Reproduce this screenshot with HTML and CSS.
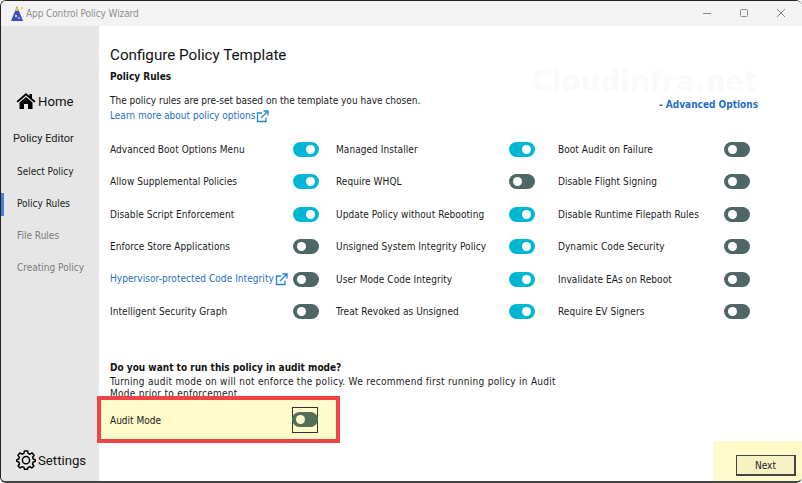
FILE: index.html
```html
<!DOCTYPE html>
<html lang="en">
<head>
    <meta charset="UTF-8">
    <meta name="viewport" content="width=device-width, initial-scale=1.0">
    <title>App Control Policy Wizard</title>
    <link rel="stylesheet" href="styles.css">
</head>
<body>
    <div class="window">
        <header class="titlebar">
            <svg class="app-icon" width="16" height="18" viewBox="0 0 16 18">
                <path d="M8 1 L14 16 L2 16 Z" fill="#3b4fc4"/>
                <path d="M8 1 L10 6 L6 6 Z" fill="#e8c23a"/>
                <circle cx="7" cy="11" r="1.2" fill="#f2d54a"/>
                <circle cx="10" cy="13" r="1" fill="#9db7f0"/>
                <circle cx="13" cy="3" r="1" fill="#e8c23a"/>
            </svg>
            <span class="app-title">App Control Policy Wizard</span>
            <div class="window-buttons">
                <svg width="10" height="10" viewBox="0 0 10 10"><path d="M1 5.5 H9" stroke="#8a8a8a" fill="none"/></svg>
                <svg width="10" height="10" viewBox="0 0 10 10"><rect x="1.5" y="1.5" width="7" height="7" rx="1" stroke="#8a8a8a" fill="none"/></svg>
                <svg width="10" height="10" viewBox="0 0 10 10"><path d="M1 1 L9 9 M9 1 L1 9" stroke="#8a8a8a" fill="none"/></svg>
            </div>
        </header>
        <div class="main">
            <nav class="sidebar">
                <div class="nav-main">
                    <svg class="nav-icon" width="20" height="18" viewBox="0 0 20 18">
                        <path d="M10 1 L0.5 9.3 L1.8 10.6 L10 3.5 L18.2 10.6 L19.5 9.3 L16 6.2 V2 H13.5 V4 Z" fill="#000"/>
                        <path d="M3.5 10.6 L10 5 L16.5 10.6 V17 H12 V12 H8 V17 H3.5 Z" fill="#000"/>
                    </svg>
                    <span>Home</span>
                </div>
                <div class="nav-group">Policy Editor</div>
                <div class="nav-item">Select Policy</div>
                <div class="nav-item current">Policy Rules</div>
                <div class="nav-item disabled">File Rules</div>
                <div class="nav-item disabled">Creating Policy</div>
                <div class="nav-main nav-settings">
                    <svg class="nav-icon" width="20" height="20" viewBox="0 0 20 20">
                        <path d="M8.4 1 H11.6 L12.1 3.4 L14 4.2 L16.1 2.9 L18.1 5.2 L16.6 7.1 L17.2 9 L19.2 9.6 V11.4 L17.2 12 L16.5 14 L17.9 16 L15.8 18 L13.9 16.7 L12 17.4 L11.5 19.2 H8.5 L8 17.4 L6 16.7 L4.1 18 L2.1 16 L3.5 14 L2.8 12 L0.8 11.4 V9.6 L2.8 9 L3.4 7.1 L1.9 5.2 L3.9 2.9 L6 4.2 L7.9 3.4 Z" fill="none" stroke="#000" stroke-width="1.5" stroke-linejoin="round"/>
                        <circle cx="10" cy="10.2" r="3.6" fill="none" stroke="#000" stroke-width="1.5"/>
                    </svg>
                    <span>Settings</span>
                </div>
            </nav>
            <section class="content">
                <h1>Configure Policy Template</h1>
                <h2>Policy Rules</h2>
                <div class="intro">
                    <div>
                        <p>The policy rules are pre-set based on the template you have chosen.</p>
                        <a class="link">Learn more about policy options<svg width="13" height="13" viewBox="0 0 13 13"><path d="M10 7.5 V11.5 H1.5 V3 H6 M5 8 L11.5 1.5 M7.5 1 H12 V5.5" fill="none" stroke="#1f86d8" stroke-width="1.3"/></svg></a>
                    </div>
                    <a class="advanced">- Advanced Options</a>
                </div>
                <div class="rules">
                    <div class="rule"><span>Advanced Boot Options Menu</span><i class="toggle on"></i></div>
                    <div class="rule"><span>Managed Installer</span><i class="toggle on"></i></div>
                    <div class="rule"><span>Boot Audit on Failure</span><i class="toggle"></i></div>
                    <div class="rule"><span>Allow Supplemental Policies</span><i class="toggle on"></i></div>
                    <div class="rule"><span>Require WHQL</span><i class="toggle"></i></div>
                    <div class="rule"><span>Disable Flight Signing</span><i class="toggle"></i></div>
                    <div class="rule"><span>Disable Script Enforcement</span><i class="toggle on"></i></div>
                    <div class="rule"><span>Update Policy without Rebooting</span><i class="toggle on"></i></div>
                    <div class="rule"><span>Disable Runtime Filepath Rules</span><i class="toggle"></i></div>
                    <div class="rule"><span>Enforce Store Applications</span><i class="toggle"></i></div>
                    <div class="rule"><span>Unsigned System Integrity Policy</span><i class="toggle on"></i></div>
                    <div class="rule"><span>Dynamic Code Security</span><i class="toggle"></i></div>
                    <div class="rule">
                        <a class="link">Hypervisor-protected Code Integrity<svg width="13" height="13" viewBox="0 0 13 13"><path d="M10 7.5 V11.5 H1.5 V3 H6 M5 8 L11.5 1.5 M7.5 1 H12 V5.5" fill="none" stroke="#1f86d8" stroke-width="1.3"/></svg></a>
                        <i class="toggle"></i>
                    </div>
                    <div class="rule"><span>User Mode Code Integrity</span><i class="toggle on"></i></div>
                    <div class="rule"><span>Invalidate EAs on Reboot</span><i class="toggle"></i></div>
                    <div class="rule"><span>Intelligent Security Graph</span><i class="toggle"></i></div>
                    <div class="rule"><span>Treat Revoked as Unsigned</span><i class="toggle on"></i></div>
                    <div class="rule"><span>Require EV Signers</span><i class="toggle"></i></div>
                </div>
                <h2 class="audit-title">Do you want to run this policy in audit mode?</h2>
                <p class="audit-text">Turning audit mode on will not enforce the policy. We recommend first running policy in Audit Mode prior to enforcement.</p>
            </section>
        </div>
        <div class="watermark">Cloudinfra.net</div>
        <div class="audit-box"><span class="audit-label">Audit Mode</span><span class="audit-focus"><i class="toggle audit"></i></span></div>
        <div class="next-area"><button class="next">Next</button></div>
    </div>
</body>
</html>
```

FILE: styles.css
```css
body {
    margin: 0;
    background-color: #fff;
    font-family: "DejaVu Sans", sans-serif;
    font-stretch: condensed;
    font-size: 10px;
    color: #1a1a1a;
}
.window {
    position: relative;
    width: 802px;
    height: 483px;
    box-sizing: border-box;
    border-top: 1px solid #222;
    border-left: 1px solid #222;
    border-bottom: 2px solid #444;
    border-radius: 6px;
    overflow: hidden;
    display: flex;
    flex-direction: column;
}
.titlebar {
    height: 25px;
    background-color: #f3f3f3;
    display: flex;
    align-items: center;
    padding-left: 8px;
    flex-shrink: 0;
}
.app-title {
    margin-left: 1px;
    color: #8f8f8f;
    font-size: 10px;
    letter-spacing: -0.1px;
}
.window-buttons {
    margin-left: auto;
    margin-right: 16px;
    margin-bottom: 2px;
    display: flex;
    gap: 27px;
}
.main {
    flex: 1;
    display: flex;
    min-height: 0;
}
.sidebar {
    width: 98px;
    flex-shrink: 0;
    background-color: #e6e6e6;
    display: flex;
    flex-direction: column;
}
.nav-main {
    display: flex;
    align-items: center;
    gap: 2px;
    margin-top: 65px;
    padding-left: 15px;
    height: 20px;
    font-size: 13.2px;
    font-family: Roboto, sans-serif;
    font-stretch: normal;
    color: #111;
}
.nav-settings {
    margin-top: auto;
    margin-bottom: 11px;
}
.nav-group {
    margin-top: 18px;
    padding-left: 12px;
    height: 21px;
    line-height: 20px;
    font-size: 11px;
    font-family: Roboto, sans-serif;
    font-stretch: normal;
}
.nav-item {
    position: relative;
    margin-top: 12px;
    padding-left: 16px;
    height: 20px;
    line-height: 20px;
    font-size: 10px;
}
.nav-item.disabled {
    color: #7a7a7a;
}
.nav-item.current::before {
    content: "";
    position: absolute;
    left: 0;
    top: -1px;
    width: 3px;
    height: 23px;
    background-color: #4a7fd6;
}
.content {
    flex: 1;
    min-width: 0;
    padding: 18px 44px 0 11px;
    background-color: #fff;
}
h1 {
    margin: 0;
    font-family: Roboto, sans-serif;
    font-stretch: normal;
    font-size: 15.2px;
    font-weight: 400;
    line-height: 22px;
    color: #111;
}
h2 {
    margin: 4px 0 0;
    font-size: 10px;
    font-weight: 700;
    line-height: 14px;
    color: #111;
}
p {
    margin: 0;
    line-height: 14px;
}
.intro {
    margin-top: 10px;
    display: flex;
    justify-content: space-between;
    align-items: flex-start;
}
.intro p {
    margin-bottom: 1px;
}
.link {
    color: #1f6fc4;
    display: inline-flex;
    align-items: center;
    white-space: nowrap;
    line-height: 14px;
}
.link svg {
    margin-left: 1px;
}
.advanced {
    margin-top: 5px;
    color: #1f6fc4;
    font-weight: 700;
}
.rules {
    margin-top: 10.4px;
    display: grid;
    grid-template-columns: 226px 222px 192px;
    grid-auto-rows: 32.4px;
    letter-spacing: 0.06px;
}
.rule {
    display: flex;
    align-items: center;
    justify-content: space-between;
    padding-right: 17px;
}
.rule:nth-child(3n) {
    padding-right: 0;
}
.rule:nth-child(3n+2) {
    padding-right: 23px;
}
.toggle {
    display: block;
    position: relative;
    width: 26px;
    height: 15px;
    border-radius: 8px;
    background-color: #4f6666;
    flex-shrink: 0;
}
.toggle::after {
    content: "";
    position: absolute;
    top: 3px;
    left: 4px;
    width: 9px;
    height: 9px;
    border-radius: 50%;
    background-color: #fff;
}
.toggle.on {
    background-color: #00b7d3;
}
.toggle.on::after {
    left: auto;
    right: 4px;
}
.toggle.audit {
    background-color: #55705a;
}
.toggle.audit::after {
    background-color: #fefac9;
}
.audit-title {
    margin-top: 33.6px;
}
.audit-text {
    margin-top: 1px;
    width: 450px;
    line-height: 12px;
    letter-spacing: 0.28px;
}
.watermark {
    position: absolute;
    left: 530px;
    top: 68px;
    font-size: 28px;
    font-stretch: normal;
    line-height: 25px;
    font-weight: 700;
    color: #fafafa;
    white-space: nowrap;
}
.audit-box {
    position: absolute;
    left: 96px;
    top: 395px;
    width: 243px;
    height: 47px;
    box-sizing: border-box;
    border: 4px solid #f04343;
    background-color: #fefac9;
    display: flex;
    align-items: center;
    padding-left: 9px;
}
.audit-label {
    margin-top: 2px;
}
.audit-focus {
    margin-left: auto;
    margin-right: 18px;
    width: 26px;
    height: 26px;
    box-sizing: border-box;
    border: 1px solid #333;
    display: flex;
    align-items: center;
}
.audit-focus .toggle {
    margin-left: -1px;
}
.next-area {
    position: absolute;
    right: 0;
    bottom: 0;
    left: 713px;
    top: 440px;
    background-color: #fefac9;
    display: flex;
    justify-content: flex-end;
    align-items: flex-end;
    padding: 0 6px 5px 0;
}
.next {
    width: 60px;
    height: 21px;
    padding: 0;
    border: 1px solid #444;
    border-bottom-width: 2px;
    border-right-width: 2px;
    background-color: #f6f2c4;
    font-family: "DejaVu Sans", sans-serif;
    font-stretch: condensed;
    font-size: 10px;
    color: #1a1a1a;
}
```
